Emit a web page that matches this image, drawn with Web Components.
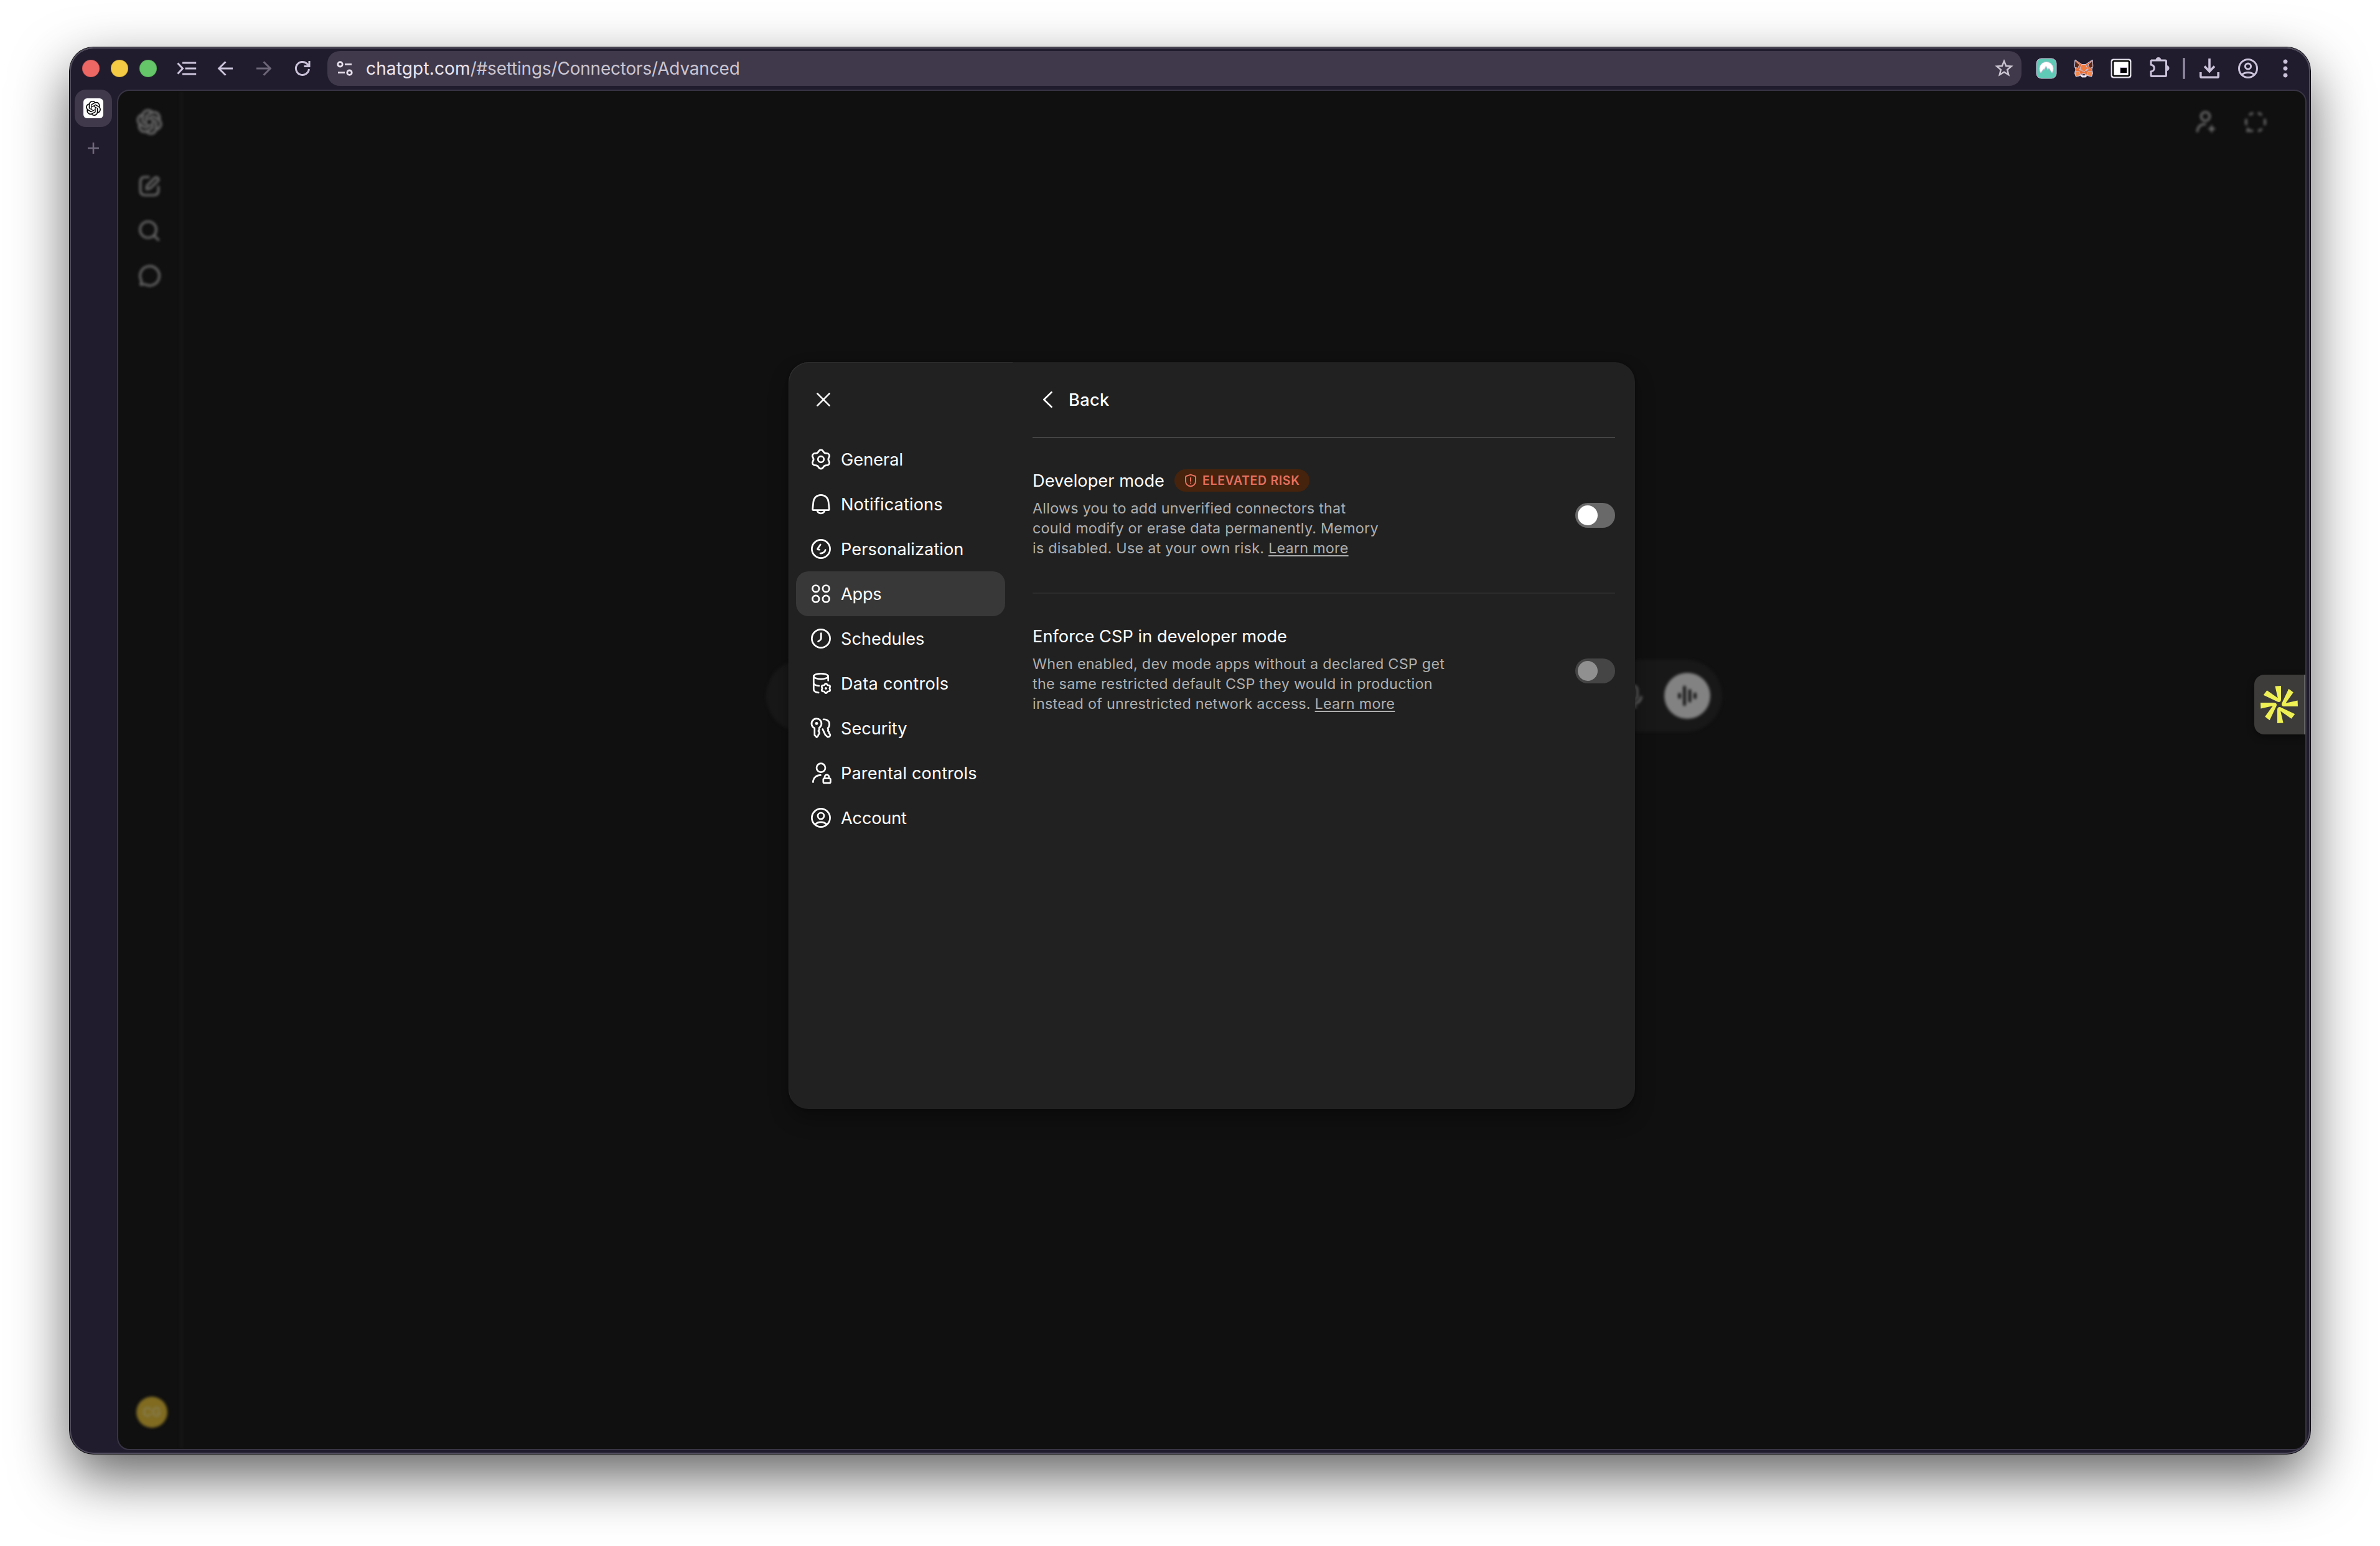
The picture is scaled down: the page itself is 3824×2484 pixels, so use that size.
<!DOCTYPE html>
<html lang="en">
<head>
<meta charset="utf-8">
<title>Settings</title>
<style>
html,body{margin:0;background:#fff}
body{width:3824px;height:2484px;overflow:hidden;font-family:Inter,"Liberation Sans",sans-serif;display:flex;box-sizing:border-box;padding:76px 112px 148px}
</style>
</head>
<body>
<browser-window>
  <tool-bar slot="toolbar"></tool-bar>
  <tab-strip slot="tabs"></tab-strip>
  <page-backdrop></page-backdrop>
  <settings-dialog>
    <nav-item slot="nav" icon="general">General</nav-item>
    <nav-item slot="nav" icon="bell" style="--ls:.12px">Notifications</nav-item>
    <nav-item slot="nav" icon="person" style="--ls:.06px">Personalization</nav-item>
    <nav-item slot="nav" icon="apps" style="--ls:-.25px" selected>Apps</nav-item>
    <nav-item slot="nav" icon="clock">Schedules</nav-item>
    <nav-item slot="nav" icon="data" style="--ls:.2px">Data controls</nav-item>
    <nav-item slot="nav" icon="keys" style="--ls:-.05px">Security</nav-item>
    <nav-item slot="nav" icon="parental" style="--ls:.12px">Parental controls</nav-item>
    <nav-item slot="nav" icon="account" style="--ls:-.2px">Account</nav-item>
    <setting-row>
      <span slot="title">Developer mode</span>
      <risk-badge slot="badge">ELEVATED RISK</risk-badge>
      Allows you to add unverified connectors that<br>could modify or erase data permanently. Memory<br>is disabled. Use at your own risk. <text-link>Learn more</text-link>
      <toggle-switch slot="control"></toggle-switch>
    </setting-row>
    <setting-row>
      <span slot="title">Enforce CSP in developer mode</span>
      When enabled, dev mode apps without a declared CSP get<br>the same restricted default CSP they would in production<br>instead of unrestricted network access. <text-link>Learn more</text-link>
      <toggle-switch slot="control" disabled></toggle-switch>
    </setting-row>
  </settings-dialog>
  <side-widget></side-widget>
</browser-window>
<script>
const OPENAI='M22.2819 9.8211a5.9847 5.9847 0 0 0-.5157-4.9108 6.0462 6.0462 0 0 0-6.5098-2.9A6.0651 6.0651 0 0 0 4.9807 4.1818a5.9847 5.9847 0 0 0-3.9977 2.9 6.0462 6.0462 0 0 0 .7427 7.0966 5.98 5.98 0 0 0 .511 4.9107 6.051 6.051 0 0 0 6.5146 2.9001A5.9847 5.9847 0 0 0 13.2599 24a6.0557 6.0557 0 0 0 5.7718-4.2058 5.9894 5.9894 0 0 0 3.9977-2.9001 6.0557 6.0557 0 0 0-.7475-7.0729zm-9.022 12.6081a4.4755 4.4755 0 0 1-2.8764-1.0408l.1419-.0804 4.7783-2.7582a.7948.7948 0 0 0 .3927-.6813v-6.7369l2.02 1.1686a.071.071 0 0 1 .038.052v5.5826a4.504 4.504 0 0 1-4.4945 4.4944zm-9.6607-4.1254a4.4708 4.4708 0 0 1-.5346-3.0137l.142.0852 4.783 2.7582a.7712.7712 0 0 0 .7806 0l5.8428-3.3685v2.3324a.0804.0804 0 0 1-.0332.0615L9.74 19.9502a4.4992 4.4992 0 0 1-6.1408-1.6464zM2.3408 7.8956a4.485 4.485 0 0 1 2.3655-1.9728V11.6a.7664.7664 0 0 0 .3879.6765l5.8144 3.3543-2.0201 1.1685a.0757.0757 0 0 1-.071 0l-4.8303-2.7865A4.504 4.504 0 0 1 2.3408 7.872zm16.5963 3.8558L13.1038 8.364 15.1192 7.2a.0757.0757 0 0 1 .071 0l4.8303 2.7913a4.4944 4.4944 0 0 1-.6765 8.1042v-5.6772a.79.79 0 0 0-.407-.667zm2.0107-3.0231l-.142-.0852-4.7735-2.7818a.7759.7759 0 0 0-.7854 0L9.409 9.2297V6.8974a.0662.0662 0 0 1 .0284-.0615l4.8303-2.7866a4.4992 4.4992 0 0 1 6.6802 4.66zM8.3065 12.863l-2.02-1.1638a.0804.0804 0 0 1-.038-.0567V6.0742a4.4992 4.4992 0 0 1 7.3757-3.4537l-.142.0805L8.704 5.459a.7948.7948 0 0 0-.3927.6813zm1.0976-2.3654l2.602-1.4998 2.6069 1.4998v2.9994l-2.5974 1.4997-2.6067-1.4997Z';

/* Six-lobed cog outline centred on (cx,cy), scaled from a 15.2 unit radius. */
function cog(cx,cy,s){
  const rot=(x,y,a)=>{const c=Math.cos(a),n=Math.sin(a);return (cx+s*(x*c-y*n)).toFixed(2)+' '+(cy+s*(x*n+y*c)).toFixed(2)};
  let d='M'+rot(-3.6,-12.9,0);
  for(let k=0;k<6;k++){
    const a=k*Math.PI/3;
    d+='A'+4*s+' '+4*s+' 0 0 1 '+rot(3.6,-12.9,a)+'Q'+rot(5.3,-9.25,a)+' '+rot(-3.6,-12.9,a+Math.PI/3);
  }
  return d+'Z';
}

const NAV={
  general:`<path d="${cog(0,0,1)}"/><circle r="4.8"/>`,
  bell:`<path d="M-13.3 8.2L-12.2-3C-11.6-10-6.8-14.7 0-14.7S11.6-10 12.2-3L13.3 8.2Q13.4 9.6 12 9.6H-12Q-13.4 9.6-13.3 8.2ZM-6.2 10Q-4.6 14.8 0 14.8T6.2 10"/>`,
  person:`<circle r="14.6"/><path d="M-.8-7L-5.2-.6Q-5.8 .9-4.3 1L-2.3 1.2M-1 7C2.6 7.4 6.6 5 7.2 1.6"/>`,
  apps:`<circle cx="-8.2" cy="-8.2" r="5.3"/><circle cx="8.2" cy="-8.2" r="5.3"/><circle cx="-8.2" cy="8.2" r="5.3"/><circle cx="8.2" cy="8.2" r="5.3"/>`,
  clock:`<circle r="14.6"/><path d="M.3-8.4V-.4Q.3 1-.7 2L-4.4 4.6"/>`,
  data:`<ellipse cx="0" cy="-11.3" rx="11.7" ry="4.4"/><path d="M-11.7-11.3V9.5C-11.7 12.4-8.5 14.4-3.8 14.8M-11.7-.6C-11.5 2-7.6 3.8-3 4M11.7-11.3V-4.5"/><path d="${cog(8,8,.5)}"/><circle cx="8" cy="8" r="1.5" fill="#fff" stroke-width="1"/>`,
  keys:`<path d="M-10.6-.2A8 8 0 1 1-2.8-.6V2.4L-4.2 4.4L-2.6 6.6V8.6L-4.2 10.6V11.8L-6.8 14.6L-10.2 11V.4"/><circle cx="-7" cy="-7.6" r="2.4" fill="#fff" stroke="none"/><path d="M4-14.2C9.5-14.6 13.6-11.4 13.6-6.6C13.6-3.6 12.6-1.4 11-.2L11.8 2.4L11.2 4.4L13 6.2L13.2 8.2L14.8 10.2C15.4 12.6 13.6 14.4 11 14.2L7 10.8L2.8 1.6"/>`,
  parental:`<circle cy="-8.3" r="7"/><path d="M-12.7 14.7C-12.2 7.4-7 3.4-.6 3.4"/><rect x="3.8" y="8.6" width="11.6" height="7.6" rx="2"/><path d="M6 8.4V6.4A3.5 3.5 0 0 1 13 6.4V8.4"/>`,
  account:`<circle r="14.6"/><circle cy="-3" r="5"/><path d="M-9.3 10.8Q-6 6.8 0 6.8T9.3 10.8"/>`
};

const define=(name,html,setup)=>{
  const t=document.createElement('template');t.innerHTML=html;
  customElements.define(name,class extends HTMLElement{
    constructor(){super();this.attachShadow({mode:'open'}).append(t.content.cloneNode(true));}
    connectedCallback(){if(setup)setup(this,this.shadowRoot);}
  });
};

define('browser-window',`<style>
:host{display:grid;grid-template:68px 1fr/76px 1fr;width:3600px;height:2260px;box-sizing:border-box;padding:0 6px 6px 0;border-radius:38px;background:#211c2d;
box-shadow:inset 0 0 0 2px #504b5c,inset 0 2px 0 #77747e,0 0 0 1px #08070b,0 36px 90px rgba(0,0,0,.62)}
.page{display:grid;grid-template:100%/100%;border:2px solid #383444;border-radius:20px;background:#101010;overflow:hidden}
::slotted(*){grid-area:1/1}
::slotted([slot=toolbar]){grid-area:1/1/2/3}
::slotted([slot=tabs]){grid-area:2/1}
</style>
<slot name="toolbar"></slot><slot name="tabs"></slot><div class="page"><slot></slot></div>`);

define('tool-bar',`<style>
:host{display:flex;align-items:center;box-sizing:border-box;height:68px;padding:0 20px;color:#cbc3da}
svg{display:block;flex:none;fill:none;stroke:currentColor;overflow:visible}
.lights{display:flex;gap:18px}
.lights i{width:28px;height:28px;border-radius:50%;box-sizing:border-box;border:1px solid rgba(0,0,0,.12)}
.nav{display:flex;align-items:center;margin-left:28px;gap:22px}
.url{display:flex;align-items:center;flex:none;width:2722px;height:56px;box-sizing:border-box;margin-left:20px;padding:0 14px;border-radius:20px;background:#3f394b;font-size:28px;letter-spacing:-.2px;white-space:pre}
.url .t{margin-left:20px;flex:1;color:#cbc5d1}
.url b{font-weight:400;color:#ece6f0;letter-spacing:.15px}
.ext{display:flex;align-items:center;margin-left:24px}
</style>
<div class="lights"><i style="background:#ed6765"></i><i style="background:#f4ca44"></i><i style="background:#64c668"></i></div>
<div class="nav">
<svg width="40" height="40" viewBox="-20 -20 40 40" stroke-width="3"><path d="M-14.5-8.5L-6.5 0L-14.5 8.5M-7-9H15.2M-2.5 0H15.2M-7 9H15.2"/></svg>
<svg width="40" height="40" viewBox="-20 -20 40 40" stroke-width="3"><path d="M12 0H-10M.5-10.8L-10.3 0L.5 10.8"/></svg>
<svg width="40" height="40" viewBox="-20 -20 40 40" stroke-width="3" color="#6d6679"><path d="M-12 0H10M-.5-10.8L10.3 0L-.5 10.8"/></svg>
<svg width="40" height="40" viewBox="-20 -20 40 40" stroke-width="3"><path d="M10.4 1A10.5 10.5 0 1 1 7.3-7.6L10-4.8M11-12V-3.5H2.5"/></svg>
</div>
<div class="url">
<svg width="28" height="28" viewBox="-14 -14 28 28" stroke-width="2.8" color="#e7e0ec"><circle cx="-7.5" cy="-6.7" r="3.7"/><path d="M0-6.7H11M-11 6.7H0"/><circle cx="7.5" cy="6.7" r="3.7"/></svg>
<span class="t"><b>chatgpt.com</b>/#settings/Connectors/Advanced</span>
<svg width="28" height="28" viewBox="-14 -14 28 28" stroke-width="2.5" color="#cbc5d1"><path d="M0-11.8L3.2-4L11.6-3.4L5.2 2L7.2 10.2L0 5.8L-7.2 10.2L-5.2 2L-11.6-3.4L-3.2-4Z"/></svg>
</div>
<div class="ext">
<svg width="32" height="32" viewBox="0 0 32 32" stroke="none"><rect width="32" height="32" rx="8" fill="#5fcbb7"/><path fill="#fff" d="M7 23.2A11.2 11.2 0 1 1 25 23.2L20 15.5L18.3 18.2L15.4 12.2L12.2 18.2L11.4 16.8Z"/></svg>
<svg style="margin-left:28px" width="32" height="32" viewBox="0 0 32 32" stroke="none"><path fill="#e8703a" d="M2 2L13 9.5H19L30 2L30.8 11L29 18L30.5 24L28.5 29L21.5 27.5L19 29.5H13L10.5 27.5L3.5 29L1.5 24L3 18L1.2 11Z"/><path fill="#5f2812" d="M2 3.5L9 10L6.5 15.5L1.200 14ZM30 3.5L23 10L25.5 15.5L30.8 14Z"/><path fill="#f07c40" d="M13 9.5H19L22 16L16 22L10 16Z"/><path fill="#f58a4b" d="M1.8 21H9L11 27L3.5 29ZM30.2 21H23L21 27L28.5 29Z"/><path fill="#3a2a2a" d="M8.5 17L12.2 18.2L12 20ZM23.5 17L19.8 18.2L20 20ZM13.5 24.5H18.500L18 27H14Z"/><path fill="#fff" d="M10.5 26L13.5 26.5L14.2 28H17.8L18.5 26.5L21.5 26L19 30H13Z"/></svg>
<svg style="margin-left:28px" width="32" height="32" viewBox="0 0 32 32" stroke="none"><rect y="1" width="32" height="30" rx="3" fill="#fff"/><rect x="3" y="4" width="26" height="24" rx="2" fill="none" stroke="#000" stroke-width="2.6"/><rect x="14.5" y="14.5" width="11" height="9" fill="#000"/></svg>
<svg style="margin-left:28px" width="36" height="36" viewBox="0 2.5 36 36" stroke-width="3"><path d="M4 7.5H27Q28.5 7.5 28.5 9V31.5Q28.5 33 27 33H5.5Q4 33 4 31.5V25.5Q9.2 24.5 9.2 20T4 14.5V9Q4 7.5 5.5 7.5"/><path fill="currentColor" stroke="none" d="M11.5 7A4.5 4.5 0 0 1 20.5 7ZM29 15.5A4.5 4.5 0 0 1 29 24.5Z"/></svg>
<svg style="margin-left:19px" width="4" height="32" viewBox="0 0 4 32" stroke="none"><rect x="1" width="2" height="32" fill="#585366"/></svg>
<svg style="margin-left:23px" width="32" height="32" viewBox="0 0 32 32" stroke-width="3.6"><path d="M16 0V20M8 12.5L16 20.8L24 12.5M1.8 22V28.4Q1.8 30.2 3.6 30.2H28.4Q30.2 30.2 30.2 28.4V22"/></svg>
<svg style="margin-left:30px" width="32" height="32" viewBox="-16 -16 32 32" stroke-width="3"><circle r="14.5"/><circle cy="-3.5" r="4.6"/><path d="M-10 10.2Q-6 6.5 0 6.5T10 10.2"/></svg>
<svg style="margin-left:40px" width="8" height="32" viewBox="-4 -16 8 32" stroke="none"><g fill="#cbc3da"><circle cy="-11" r="3.1"/><circle r="3.1"/><circle cy="11" r="3.1"/></g></svg>
</div>`);

define('tab-strip',`<style>
:host{display:flex;flex-direction:column;align-items:center;gap:19px}
.tab{display:grid;place-items:center;width:60px;height:60px;border-radius:18px;background:#3f394b}
.fav{display:grid;place-items:center;width:32px;height:32px;border-radius:6px;background:#fff}
svg{display:block}
</style>
<div class="tab"><div class="fav"><svg width="24" height="24" viewBox="0 0 24 24"><path d="${OPENAI}"/></svg></div></div>
<svg width="30" height="30" viewBox="-15 -15 30 30" stroke="#6f687c" stroke-width="2.6"><path d="M-9 0H9M0-9V9"/></svg>`);

define('page-backdrop',`<style>
:host{display:grid;grid-template-columns:103px 1fr;filter:blur(2px);color:#676767}
svg{display:block;fill:none;stroke:currentColor;stroke-width:3.7;stroke-linecap:round;stroke-linejoin:round;overflow:visible}
.rail{display:flex;flex-direction:column;align-items:center;box-sizing:border-box;border-right:3px solid #181818;width:103px;padding:30px 0 34px 0}
.av{display:grid;place-items:center;width:50px;height:50px;margin:auto 0 0 8px;border-radius:50%;background:#806b21;color:#87815c;font-size:20px;font-weight:500}
.main{display:flex;flex-direction:column}
.top{display:flex;justify-content:flex-end;gap:39px;padding:30px 60px 0 0}
.bar{display:flex;align-items:center;justify-content:flex-end;box-sizing:border-box;width:1536px;height:116px;margin:844px auto 0;padding-right:19px;gap:31px;border-radius:58px;background:#181818}
.voice{display:grid;place-items:center;width:74px;height:74px;border-radius:50%;background:#828282;color:#101010}
</style>
<div class="rail">
<svg width="40" height="40" viewBox="0 0 24 24" style="stroke-width:.8;fill:currentColor"><path d="${OPENAI}"/></svg>
<svg style="margin-top:63px" width="40" height="40" viewBox="-20 -20 40 40"><path d="M-1-14.5H-7Q-14.5-14.5-14.5-7V7Q-14.5 14.5-7 14.5H7Q14.5 14.5 14.5 7V1M-4.5 5L-4-.5L8.5-13Q11-15.2 13.5-13T13.5-8L1 4Z"/></svg>
<svg style="margin-top:32px" width="40" height="40" viewBox="-20 -20 40 40"><circle cx="-2" cy="-2" r="13"/><path d="M7.5 7.5L14.5 14.5"/></svg>
<svg style="margin-top:32px" width="40" height="40" viewBox="-20 -20 40 40"><path d="M-14 14.5L-12.6 8.5A15.5 15.5 0 1 1-7.5 13.5Z"/></svg>
<div class="av">CG</div>
</div>
<div class="main">
<div class="top">
<svg width="40" height="40" viewBox="-20 -20 40 40"><circle cx="-1.5" cy="-9" r="7"/><path d="M-14.5 15Q-13 3.5-2 3.5"/><path fill="currentColor" stroke-width="1" d="M8.5 4.5Q9.5 10 14.5 11Q9.5 12 8.5 17.5Q7.5 12 2.5 11Q7.5 10 8.5 4.5Z"/></svg>
<svg width="40" height="40" viewBox="-20 -20 40 40"><path style="stroke-linecap:butt" d="M-3.8-14.6A15.5 15.5 0 0 0-10-11M3.8-14.6A15.5 15.5 0 0 1 10-11M14.5-5A15.5 15.5 0 0 1 14.5 5M10.5 11A15.5 15.5 0 0 1 4 14.6M-14.5-5A15.5 15.5 0 0 0-14.5 5M-11.5 9.500L-13 14.5L-4 14"/></svg>
</div>
<div class="bar">
<svg width="40" height="40" viewBox="-20 -20 40 40"><rect x="-7.5" y="-17" width="15" height="24" rx="7.5"/><path d="M-14 2Q-11 13 0 13T14 2M0 13V18M-5 18H5"/></svg>
<div class="voice"><svg width="40" height="40" viewBox="-20 -20 40 40" style="stroke-width:4.5"><path d="M-12.5-2.5V2.5M-4.5-14V14M4-8.5V8.5M12.5-3V3"/></svg></div>
</div>
</div>`);

define('settings-dialog',`<style>
:host{display:grid;grid-template-columns:360px 1fr;box-sizing:border-box;justify-self:center;align-self:start;position:relative;width:1360px;height:1200px;margin-top:436px;border-radius:32px;background:#212121;color:#fff;box-shadow:0 16px 32px rgba(0,0,0,.3),0 0 4px rgba(0,0,0,.4)}
svg{display:block;fill:none;stroke:#fff;stroke-width:2.7;stroke-linecap:round;stroke-linejoin:round}
.side{box-sizing:border-box;padding:40px 12px 0;border-radius:32px 0 0 32px;box-shadow:inset 1px 1px 0 #2e2e2e}
.close{padding:0 24px 40px}
nav{display:flex;flex-direction:column}
.pane{display:flex;flex-direction:column;padding:0 32px}
.back{display:flex;align-items:center;height:120px;border-bottom:2px solid #444;padding-left:4px;font-size:27.2px;font-weight:500;letter-spacing:.3px}
.back span{margin-left:14px}
</style>
<div class="side"><div class="close"><svg width="40" height="40" viewBox="-20 -20 40 40"><path d="M-9.6-9.6L9.6 9.6M9.6-9.6L-9.6 9.6"/></svg></div><nav><slot name="nav"></slot></nav></div>
<div class="pane"><div class="back"><svg width="40" height="40" viewBox="-20 -20 40 40"><path d="M6.5-11.7L-5.7 0L6.5 11.7"/></svg><span>Back</span></div><slot></slot></div>`);

define('nav-item',`<style>
:host{display:flex;align-items:center;gap:12px;box-sizing:border-box;height:72px;padding:0 20px;border-radius:20px;font-size:27.2px;letter-spacing:var(--ls,0px);white-space:nowrap}
:host([selected]){background:#383838}
svg{display:block;flex:none;fill:none;stroke:#fff;stroke-width:2.7;stroke-linecap:round;stroke-linejoin:round}
</style><svg width="40" height="40" viewBox="-20 -20 40 40"></svg><slot></slot>`,(el,root)=>{root.querySelector('svg').innerHTML=NAV[el.getAttribute('icon')];});

define('setting-row',`<style>
:host{display:flex;justify-content:space-between;padding:50px 0 55px;border-bottom:2px solid #2c2c2c}
:host(:last-of-type){border:0}
.head{display:flex;align-items:center;gap:16px;height:36px;font-size:27.2px;letter-spacing:.04px}
.desc{margin-top:11px;font-size:23.3px;line-height:32px;color:#afafaf;white-space:nowrap;letter-spacing:.27px}
.ctl{padding-top:54px}
</style><div><div class="head"><slot name="title"></slot><slot name="badge"></slot></div><div class="desc"><slot></slot></div></div><div class="ctl"><slot name="control"></slot></div>`);

define('risk-badge',`<style>
:host{display:flex;align-items:center;box-sizing:border-box;width:217px;height:36px;padding-left:14px;border-radius:18px;background:#45230d;color:#e5705f;font-size:19.4px;font-weight:600;letter-spacing:.72px;white-space:nowrap}
svg{display:block;margin-right:7px}
</style><svg width="24" height="24" viewBox="-12 -12 24 24" fill="none" stroke="#e5705f" stroke-width="2" stroke-linecap="round" stroke-linejoin="round"><path d="M0-9.4L7-7Q8-6.6 8-5.5V1.5C8 5.6 4.5 8.6 0 9.5C-4.5 8.6-8 5.6-8 1.5V-5.5Q-8-6.6-7-7Z"/><path d="M0-4.2V1M0 4.3V4.4"/></svg><slot></slot>`);

define('text-link',`<style>:host{display:inline;text-decoration:underline;text-decoration-thickness:2px;text-underline-offset:3px}</style><slot></slot>`);

define('toggle-switch',`<style>
:host{display:flex;box-sizing:border-box;width:64px;height:40px;padding:4px;border-radius:20px;background:#696969}
:host([disabled]){background:#454545}
i{width:32px;height:32px;border-radius:50%;background:#fff}
:host([disabled]) i{background:#909090}
</style><i></i>`);

define('side-widget',`<style>
:host{display:grid;place-items:center;position:relative;justify-self:end;align-self:start;box-sizing:border-box;width:82px;height:96px;margin-top:938px;border-right:2px solid #626262;border-radius:16px 0 0 16px;background:#3d3c3a;box-shadow:0 4px 12px rgba(0,0,0,.4)}
svg{display:block}
</style><svg width="60" height="60" viewBox="-30 -30 60 60" fill="#eef053"></svg>`,(el,root)=>{
  /* Four V-shaped pairs of rays, a quarter turn apart. */
  root.querySelector('svg').innerHTML=[0,90,180,270].map(a=>`<path transform="rotate(${a})" d="M-6.6-29.6L3-30V-8.5Q3-4-.6-4Q-2-4-3.6-5L-25.3-15.3L-19.6-22.8L-2.2-10.4Z"/>`).join('');
});
</script>
</body>
</html>
